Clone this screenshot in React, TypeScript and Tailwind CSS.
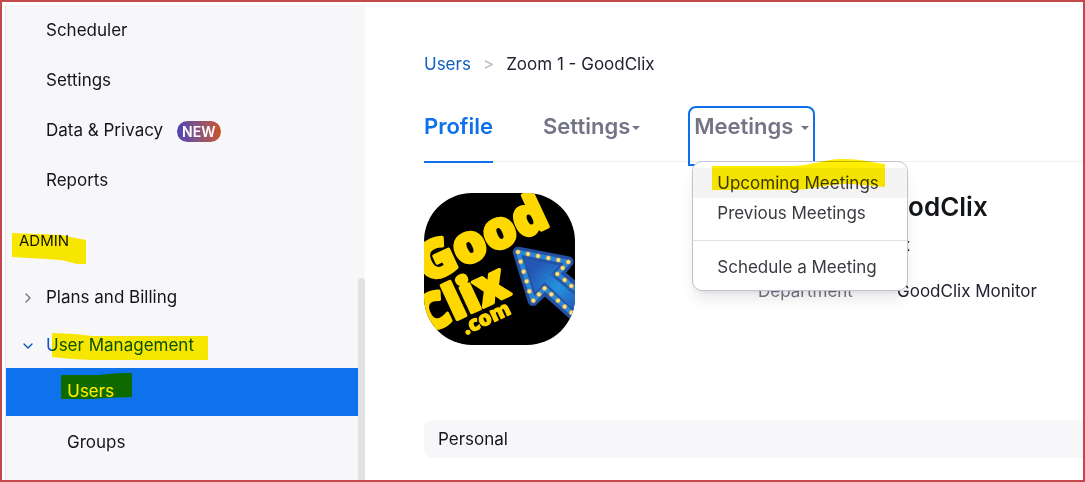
import React from 'react';
import { ChevronDown, ChevronRight } from 'lucide-react';

const mainLinks = [
    { label: 'Scheduler' },
    { label: 'Settings' },
    { label: 'Data & Privacy', isNew: true },
    { label: 'Reports' },
];

// Bulbs along the edge of the logo's arrow
const bulbs = [
    [54, 66], [84, 72], [114, 78], [145, 84], [175, 90], [205, 96], [188, 114],
    [172, 132], [194, 150], [214, 168], [62, 95], [71, 125], [80, 154], [88, 184],
    [100, 212], [117, 193], [134, 175], [154, 193], [174, 212], [194, 230], [214, 248],
];

const Caret = () => (
    <svg viewBox="0 0 8 4" className="h-1 w-2" fill="currentColor" aria-hidden="true">
        <path d="M0 0h8L4 4z" />
    </svg>
);

const Marker: React.FC<{ d: string; viewBox: string; className: string }> = ({ d, viewBox, className }) => (
    <svg viewBox={viewBox} className={`pointer-events-none absolute mix-blend-multiply ${className}`} aria-hidden="true">
        <path d={d} fill="#ffee00" />
    </svg>
);

const Logo = () => (
    <svg viewBox="0 0 453 456" className="h-[152px] w-[151px] shrink-0 rounded-[48px] bg-black" role="img" aria-label="GoodClix.com">
        <defs>
            <radialGradient id="arrowFill" cx="0.55" cy="0.5" r="0.5">
                <stop offset="0" stopColor="#2494e2" />
                <stop offset="1" stopColor="#2457b4" />
            </radialGradient>
        </defs>
        <g fill="#ffd800" stroke="#ffd800" strokeLinejoin="round" fontFamily="'Open Sans', sans-serif" fontWeight="800">
            <text transform="translate(6 272) rotate(-25)" fontSize="156" strokeWidth="10">Good</text>
            <text transform="translate(4 424) rotate(-25)" fontSize="148" strokeWidth="10">Clix</text>
            <text transform="translate(126 426) rotate(-25)" fontSize="62" strokeWidth="3">.com</text>
        </g>
        <g transform="translate(228 111)">
            <path
                d="M54 66 L205 95 L176 131 L290 225 L254 285 L134 178 L99 212 Z"
                fill="url(#arrowFill)"
                stroke="#2350a5"
                strokeWidth="32"
                strokeLinejoin="round"
            />
            <path d="M54 66 L205 96 L172 132 L280 222 L250 281 L134 175 L100 212 Z" fill="none" stroke="#2688dc" strokeWidth="14" strokeLinejoin="round" />
            <path d="M70 83 L180 105 L153 134 L260 226 L236 255 L134 158 L105 190 Z" fill="url(#arrowFill)" stroke="#2452a6" strokeWidth="3" />
            {bulbs.map(([x, y]) => (
                <circle key={`${x}-${y}`} cx={x} cy={y} r="7" fill="#ffe58a" stroke="#a88a3d" strokeWidth="2" />
            ))}
        </g>
    </svg>
);

const Sidebar = () => (
    <aside className="mt-[3px] ml-[3px] flex w-[360px] shrink-0 border-l border-[#e4e4ea] bg-[#f7f7fa]">
        <nav className="flex-1">
            <ul>
                {mainLinks.map(link => (
                    <li key={link.label}>
                        <a href="#" className="flex h-[50px] items-center gap-3.5 pt-0.5 pl-10">
                            {link.label}
                            {link.isNew && (
                                <span className="rounded-full bg-linear-to-r from-[#4f3fb5] to-[#c9501c] px-[5px] text-sm leading-[21px] font-semibold text-white">NEW</span>
                            )}
                        </a>
                    </li>
                ))}
            </ul>
            <h2 className="relative pt-[26px] pb-[22px] pl-[13px] text-[15px] leading-5">
                ADMIN
                <Marker viewBox="0 0 74 31" className="top-7 left-1.5 h-[31px] w-[74px]" d="M0 0 L50 2 L58 4 L74 7 V31 H65 L49 27 L0 24 Z" />
            </h2>
            <a href="#" className="flex h-12 items-center gap-2.5 pt-0.5 pl-3.5">
                <ChevronRight size={16} className="text-[#747487]" />
                Plans and Billing
            </a>
            <a href="#" className="relative flex h-[47px] items-center gap-2.5 pt-0.5 pl-3.5 text-[#0956b5]">
                <ChevronDown size={16} />
                User Management
                <Marker viewBox="0 0 156 27" className="top-3 left-[46px] h-[27px] w-[156px]" d="M0 0 L22 1 L40 3 H156 V27 H40 L20 26 L0 24 Z" />
            </a>
            <ul>
                <li>
                    <a href="#" className="relative flex h-12 items-center bg-[#0e72ed] pl-[61px] text-white">
                        Users
                        <Marker viewBox="0 0 71 26" className="top-[5px] left-[55px] h-[26px] w-[71px]" d="M0 2 L35 2 L60 0 H71 V24 L45 25 L30 26 H0 Z" />
                    </a>
                </li>
                <li>
                    <a href="#" className="flex h-[52px] items-center pt-0.5 pl-[61px]">Groups</a>
                </li>
            </ul>
        </nav>
        <div className="flex w-[7px] pt-[273px]">
            <div className="flex-1 rounded-t-full bg-[#e2e2e2]" />
        </div>
    </aside>
);

const MeetingsMenu = () => (
    <div className="absolute top-[55px] left-1 z-10 w-54 rounded-[10px] border border-[#c1c1d0] bg-white pt-1.5 pb-2 text-[17px] leading-[30px] font-normal whitespace-nowrap text-[#3a3a40] shadow-lg">
        <a href="#" className="relative block bg-[#f4f4f5] pl-6">
            Upcoming Meetings
            <Marker viewBox="0 0 173 31" className="-top-[9px] left-[19px] h-[31px] w-[173px]" d="M0 7 H80 C105 6 110 0 132 0 C148 0 158 3 173 5 V28 L140 25 C115 24 100 31 78 31 H0 Z" />
        </a>
        <a href="#" className="block pl-6">Previous Meetings</a>
        <hr className="mt-3 mb-[11px] border-[#dedee6]" />
        <a href="#" className="block pl-6">Schedule a Meeting</a>
    </div>
);

const App: React.FC = () => (
    <div className="flex min-h-screen border-2 border-[#c4474a] bg-white font-['Inter',sans-serif] text-[17px] text-[#131619]">
        <Sidebar />
        <main className="min-w-0 flex-1 pt-[50px] pl-[59px]">
            <nav className="flex gap-3 leading-6" aria-label="Breadcrumb">
                <a href="#" className="text-[#0e5fc0]">Users</a>
                <span className="text-[#babacc]">&gt;</span>
                <span className="text-[#222230]">Zoom 1 - GoodClix</span>
            </nav>

            <div className="mt-[30px] flex h-14 gap-[50px] border-b border-[#f1f1f4] text-[22px] leading-6 font-semibold text-[#747487]">
                <a href="#" className="-mb-0.5 border-b-2 border-[#0e71eb] pt-2 text-[#0e71eb]">Profile</a>
                <button type="button" className="flex items-start gap-0.5 pt-2">
                    Settings
                    <span className="pt-3"><Caret /></span>
                </button>
                <div className="relative -mx-0.5">
                    <button type="button" aria-haspopup="menu" aria-expanded="true" className="flex h-15 items-start gap-2 rounded-t-lg border-2 border-[#0e71eb] px-1 pt-1.5">
                        Meetings
                        <span className="pt-3"><Caret /></span>
                    </button>
                    <MeetingsMenu />
                </div>
            </div>

            <div className="flex gap-[183px] pt-[31px]">
                <Logo />
                <div>
                    <h1 className="text-[26px] leading-7 font-semibold whitespace-nowrap">Zoom 1 - GoodClix</h1>
                    <dl className="mt-3 grid grid-cols-[139px_1fr] gap-y-[22px] leading-6">
                        <dd className="col-start-2">ix</dd>
                        <dt className="text-[#747487]">Department</dt>
                        <dd className="whitespace-nowrap text-[#222230]">GoodClix Monitor</dd>
                    </dl>
                </div>
            </div>

            <h2 className="mt-[75px] rounded-l-lg bg-[#f7f7fa] px-3.5 py-[7px] leading-6">Personal</h2>
        </main>
    </div>
);

export default App;
